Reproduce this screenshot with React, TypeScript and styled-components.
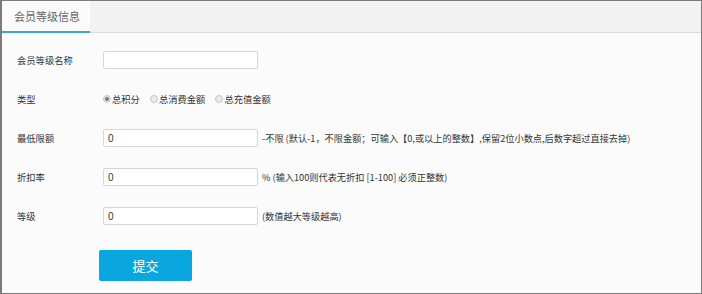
import React from "react";
import styled, { createGlobalStyle } from "styled-components";

const Global = createGlobalStyle`
  html, body { margin: 0; padding: 0; background: #ffffff; }
  body { font-family: "Microsoft YaHei", "Noto Sans CJK SC", "Liberation Sans", sans-serif; }
  * { box-sizing: border-box; }
`;

const Frame = styled.div`
  width: 702px;
  height: 294px;
  border-top: 1px solid #7b7b7b;
  border-right: 1px solid #7b7b7b;
  border-bottom: 1px solid #7b7b7b;
  border-left: 2px solid #7b7b7b;
  background: #fbfbfb;
  display: flex;
  flex-direction: column;
  overflow: hidden;
`;

const TabBar = styled.div`
  height: 32px;
  background: #f2f2f2;
  border-bottom: 1px solid #dcdcdc;
  display: flex;
  align-items: stretch;
  flex-shrink: 0;
`;

const Tab = styled.div<{ $active?: boolean }>`
  width: 88px;
  padding-left: 12px;
  display: flex;
  align-items: center;
  font-size: 11px;
  color: #666;
  background: ${(p) => (p.$active ? "#fbfbfb" : "transparent")};
  border-bottom: 2px solid ${(p) => (p.$active ? "#3aa9c8" : "transparent")};
  margin-bottom: -1px;
`;

const Form = styled.div`
  padding: 18px 0 0 15px;
  display: flex;
  flex-direction: column;
  gap: 21px;
`;

const Row = styled.div`
  display: flex;
  align-items: center;
  height: 18px;
`;

const Label = styled.div`
  width: 86px;
  font-size: 9.3px;
  color: #333;
`;

const Input = styled.input`
  width: 155px;
  height: 18px;
  border: 1px solid #d6d6d6;
  border-radius: 2px;
  background: #fff;
  padding: 0 4px;
  font-size: 10px;
  font-family: "Liberation Sans", "Noto Sans CJK SC", sans-serif;
  color: #333;
  outline: none;
`;

const Help = styled.span`
  margin-left: 4px;
  font-size: 9.2px;
  color: #333;
  white-space: nowrap;
`;

const RadioGroup = styled.div`
  display: flex;
  align-items: center;
  gap: 10px;
`;

const RadioItem = styled.label`
  display: flex;
  align-items: center;
  font-size: 9.3px;
  color: #333;
`;

const RadioDot = styled.span<{ $checked?: boolean }>`
  width: 8px;
  height: 8px;
  border-radius: 50%;
  border: 1px solid #c4c4c4;
  background: #ececec;
  margin-right: 1px;
  display: inline-flex;
  align-items: center;
  justify-content: center;
  &::after {
    content: "";
    width: 4px;
    height: 4px;
    border-radius: 50%;
    background: ${(p) => (p.$checked ? "#777" : "transparent")};
  }
`;

const ButtonRow = styled.div`
  padding-left: 82px;
  margin-top: 4px;
`;

const Submit = styled.button`
  width: 93px;
  height: 31px;
  border: none;
  border-radius: 2px;
  background: #0aa6df;
  color: #fff;
  font-size: 13px;
  font-family: "Microsoft YaHei", "Noto Sans CJK SC", sans-serif;
  cursor: pointer;
`;

export default function App() {
  return (
    <>
      <Global />
      <Frame>
        <TabBar>
          <Tab $active>会员等级信息</Tab>
        </TabBar>
        <Form>
          <Row>
            <Label>会员等级名称</Label>
            <Input defaultValue="" />
          </Row>
          <Row>
            <Label>类型</Label>
            <RadioGroup>
              <RadioItem>
                <RadioDot $checked />
                总积分
              </RadioItem>
              <RadioItem>
                <RadioDot />
                总消费金额
              </RadioItem>
              <RadioItem>
                <RadioDot />
                总充值金额
              </RadioItem>
            </RadioGroup>
          </Row>
          <Row>
            <Label>最低限额</Label>
            <Input defaultValue="0" />
            <Help>-不限 (默认-1，不限金额；可输入【0,或以上的整数】,保留2位小数点,后数字超过直接去掉)</Help>
          </Row>
          <Row>
            <Label>折扣率</Label>
            <Input defaultValue="0" />
            <Help>% (输入100则代表无折扣 [1-100] 必须正整数)</Help>
          </Row>
          <Row>
            <Label>等级</Label>
            <Input defaultValue="0" />
            <Help>(数值越大等级越高)</Help>
          </Row>
          <ButtonRow>
            <Submit>提交</Submit>
          </ButtonRow>
        </Form>
      </Frame>
    </>
  );
}
